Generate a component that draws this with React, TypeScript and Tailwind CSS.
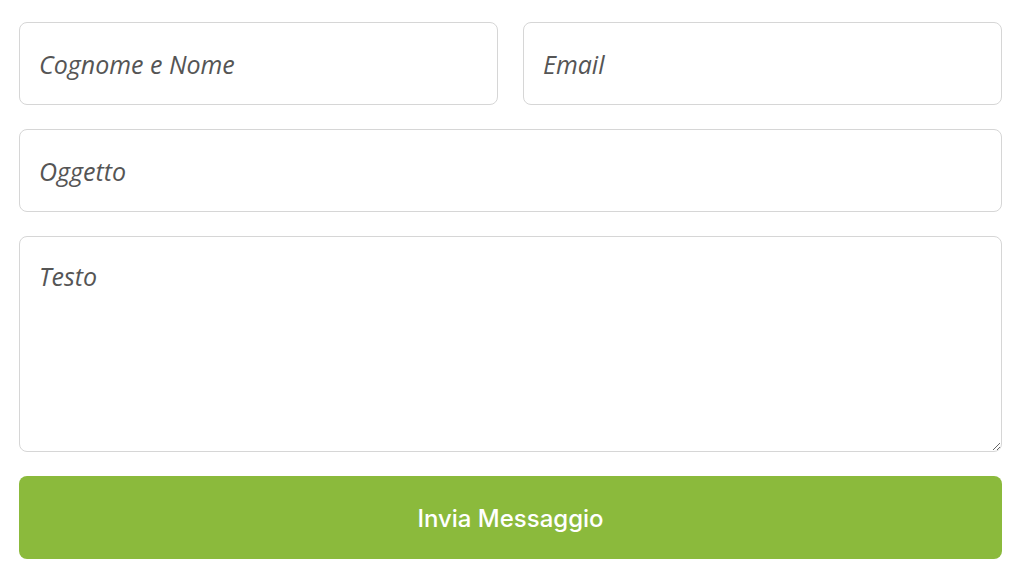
const field =
	"h-[83px] w-full rounded-[8px] border border-[#d6d6d6] bg-white px-[19px] text-[25px] text-[#555] outline-none placeholder:italic placeholder:text-[#555]";

export default function App() {
	return (
		<div className="min-h-screen bg-white pl-[19px] pr-[22px] pt-[22px] font-['Open_Sans',sans-serif]">
			<form className="flex flex-col gap-[24px]" onSubmit={(e) => e.preventDefault()}>
				<div className="grid grid-cols-2 gap-[25px]">
					<input className={field} placeholder="Cognome e Nome" />
					<input className={field} placeholder="Email" />
				</div>
				<input className={field} placeholder="Oggetto" />
				<textarea
					className="h-[216px] w-full rounded-[8px] border border-[#d6d6d6] bg-white px-[19px] pt-[23px] text-[25px] leading-[32px] text-[#555] outline-none placeholder:italic placeholder:text-[#555]"
					placeholder="Testo"
				/>
				<button
					type="submit"
					className="h-[83px] w-full rounded-[8px] bg-[#8bba3c] pt-[2px] text-[24px] font-medium text-white font-['Inter',sans-serif]"
				>
					Invia Messaggio
				</button>
			</form>
		</div>
	);
}
